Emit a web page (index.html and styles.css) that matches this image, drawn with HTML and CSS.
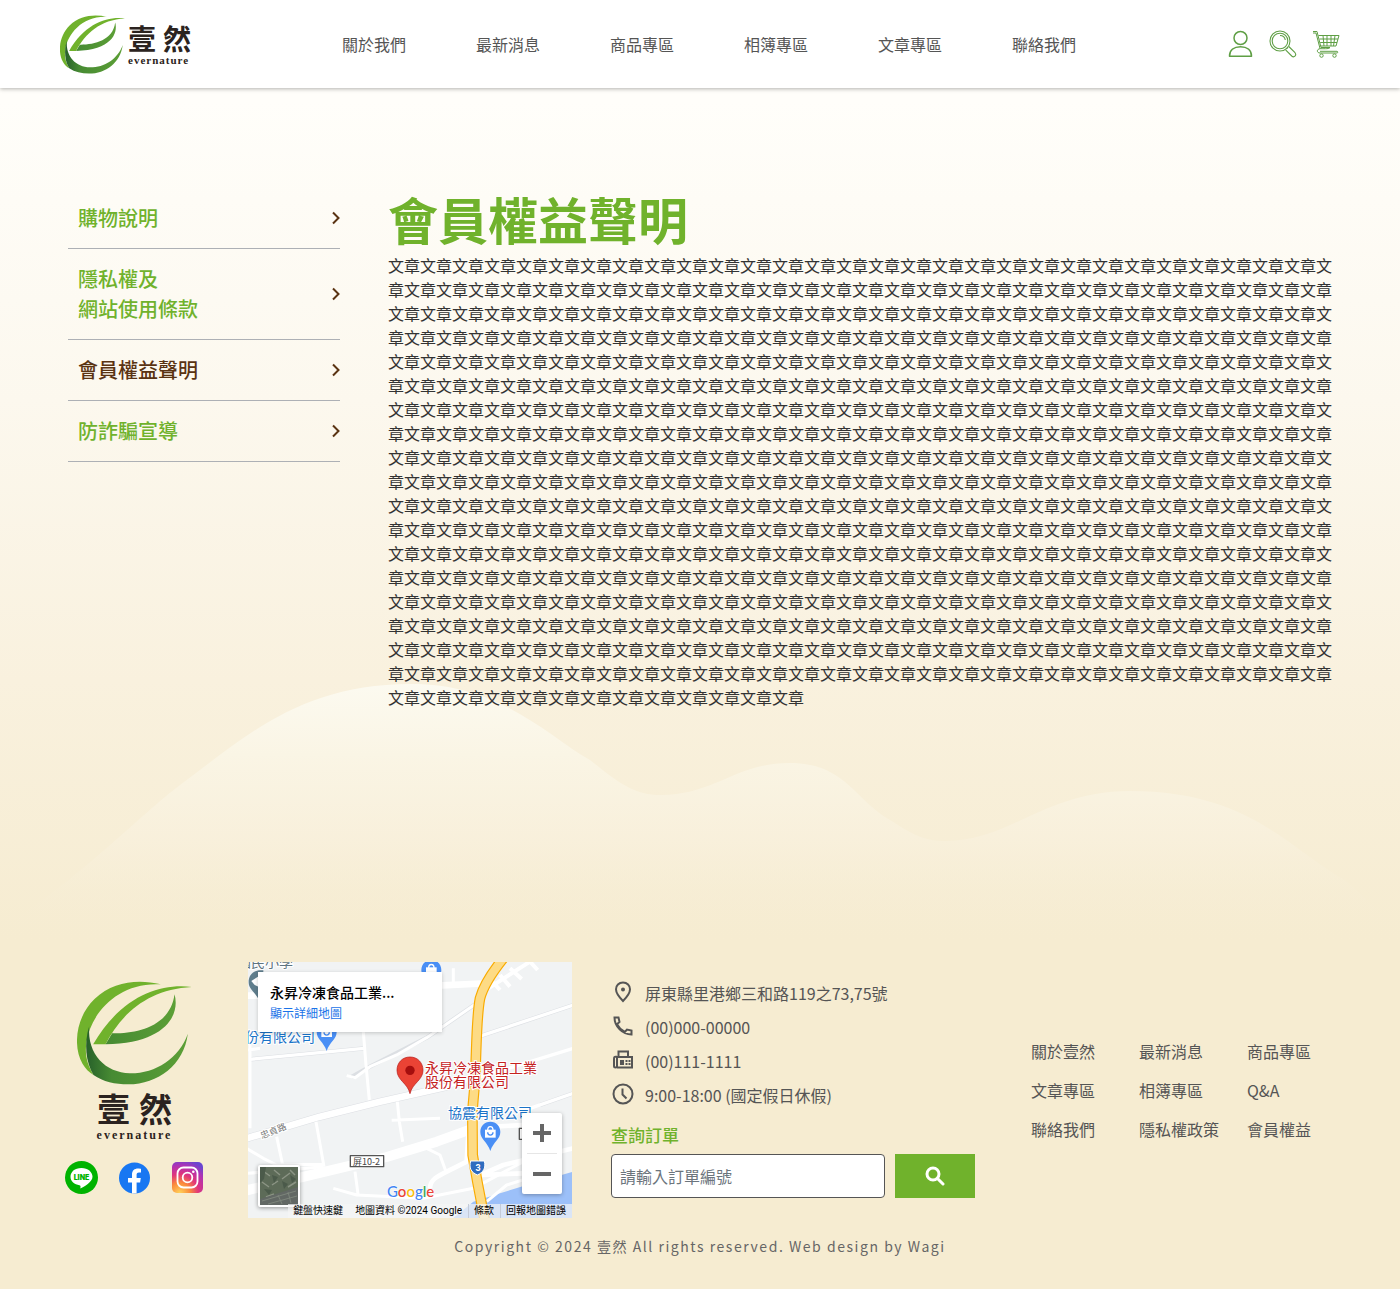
FILE: index.html
```html
<!DOCTYPE html>
<html lang="zh-Hant">
<head>
<meta charset="utf-8">
<meta name="viewport" content="width=device-width, initial-scale=1">
<title>壹然 - 會員權益聲明</title>
<link rel="stylesheet" href="styles.css">
</head>
<body>
<svg class="defs" width="0" height="0" aria-hidden="true">
  <defs>
    <linearGradient id="leafDark" x1="0" x2="1"><stop offset="0" stop-color="#27602a"/><stop offset=".25" stop-color="#478b33"/><stop offset="1" stop-color="#5c9f36"/></linearGradient>
    <linearGradient id="leafInner" x1="0" x2="1"><stop offset="0" stop-color="#468a33"/><stop offset="1" stop-color="#5c9f36"/></linearGradient>
    <symbol id="leaf" viewBox="82 60 344 312">
      <path fill="#70b22c" d="M333 70C262 54 190 62 134 114C78 168 68 256 98 308C106 322 118 334 131 342C112 310 104 280 110 244C122 158 204 62 333 70Z"/>
      <path fill="url(#leafDark)" d="M118 196C102 248 108 305 131 342C160 362 196 370 235 370C325 369 402 312 414 218C388 292 316 338 240 337C168 335 112 282 118 196Z"/>
      <path fill="url(#leafInner)" d="M374 100C391 158 352 247 167 250L187 217C262 218 362 196 374 100Z"/>
      <path fill="#70b22c" d="M426 78C330 66 214 106 130 250L167 250C214 158 296 84 426 78Z"/>
    </symbol>
  </defs>
</svg>

<header class="header">
  <a class="logo" href="#">
    <svg class="logo-leaf"><use href="#leaf"/></svg>
    <span class="logo-words"><span class="logo-name"><span>壹</span><span>然</span></span><span class="logo-latin">evernature</span></span>
  </a>
  <nav class="nav">
    <a href="#">關於我們</a><a href="#">最新消息</a><a href="#">商品專區</a><a href="#">相簿專區</a><a href="#">文章專區</a><a href="#">聯絡我們</a>
  </nav>
  <div class="tools">
    <a href="#" aria-label="會員"><svg width="26" height="28" viewBox="0 0 26 28" fill="none" stroke="#5f9f45" stroke-width="1.5"><circle cx="12.500" cy="8" r="6.500"/><path d="M1.500 26.200C1.500 20 6 16.800 12.500 16.800S23.500 20 23.500 26.200Z" stroke-linejoin="round"/></svg></a>
    <a href="#" aria-label="搜尋"><svg width="28" height="28" viewBox="0 0 28 28" fill="none" stroke="#5f9f45" stroke-width="1.1"><circle cx="11" cy="11" r="10"/><circle cx="11" cy="11" r="7.800"/><path d="M11 5.500A5.500 5.500 0 0 1 16.300 10M17.400 18.800L19 17.200M19.800 16.500L26 22.700C28 25.500 25 28 22.700 26L16.600 19.900"/></svg></a>
    <a href="#" aria-label="購物車"><svg width="28" height="28" viewBox="0 0 28 28" fill="none" stroke="#5f9f45" stroke-width="1"><path d="M1 1.500H5L9 17.500H18M1 3H4L8 18.500M6.500 5.500H27L24 16H9M7.500 9H26M8.200 12.500H25M11 5.500L12 16M15 5.500V16M19 5.500V16M23 5.500L21.500 16M18 17.500C17 19 14 18.700 8 18.700C4.500 19 4.500 23 8 23H25C26 23 26 21.300 25 21.300H8"/><circle cx="9.500" cy="25.600" r="1.700"/><circle cx="22.500" cy="25.600" r="1.700"/></svg></a>
  </div>
</header>

<main class="main">
  <svg class="hills" viewBox="0 684 1400 290" preserveAspectRatio="none" aria-hidden="true">
    <defs><linearGradient id="hill" gradientUnits="userSpaceOnUse" x1="0" y1="684" x2="0" y2="930"><stop offset="0" stop-color="#fcfaf0"/><stop offset=".3" stop-color="#faf5e5" stop-opacity=".95"/><stop offset=".65" stop-color="#f8f0dc" stop-opacity=".8"/><stop offset="1" stop-color="#f6ecd2" stop-opacity="0"/></linearGradient></defs>
    <path fill="url(#hill)" d="M0 930C90 870 140 815 180 785C245 737 300 684 411 684C500 684 545 734 590 760C620 784 635 795 661 795C715 795 735 763 790 763C845 763 855 800 890 820C915 836 925 841 946 841C1010 841 1045 791 1130 791C1250 791 1290 850 1345 880L1400 930Z"/>
  </svg>
  <aside class="side">
    <a href="#">購物說明<svg class="chev" viewBox="0 0 8 14"><path d="M1 1.500L6.500 7L1 12.500"/></svg></a>
    <a href="#"><span>隱私權及<br>網站使用條款</span><svg class="chev" viewBox="0 0 8 14"><path d="M1 1.500L6.500 7L1 12.500"/></svg></a>
    <a class="current" href="#" aria-current="page">會員權益聲明<svg class="chev" viewBox="0 0 8 14"><path d="M1 1.500L6.500 7L1 12.500"/></svg></a>
    <a href="#">防詐騙宣導<svg class="chev" viewBox="0 0 8 14"><path d="M1 1.500L6.500 7L1 12.500"/></svg></a>
  </aside>
  <article class="article">
    <h1>會員權益聲明</h1>
    <p><!--
-->文章文章文章文章文章文章文章文章文章文章文章文章文章文章文章文章<!--
-->文章文章文章文章文章文章文章文章文章文章文章文章文章文章文章文章<!--
-->文章文章文章文章文章文章文章文章文章文章文章文章文章文章文章文章<!--
-->文章文章文章文章文章文章文章文章文章文章文章文章文章文章文章文章<!--
-->文章文章文章文章文章文章文章文章文章文章文章文章文章文章文章文章<!--
-->文章文章文章文章文章文章文章文章文章文章文章文章文章文章文章文章<!--
-->文章文章文章文章文章文章文章文章文章文章文章文章文章文章文章文章<!--
-->文章文章文章文章文章文章文章文章文章文章文章文章文章文章文章文章<!--
-->文章文章文章文章文章文章文章文章文章文章文章文章文章文章文章文章<!--
-->文章文章文章文章文章文章文章文章文章文章文章文章文章文章文章文章<!--
-->文章文章文章文章文章文章文章文章文章文章文章文章文章文章文章文章<!--
-->文章文章文章文章文章文章文章文章文章文章文章文章文章文章文章文章<!--
-->文章文章文章文章文章文章文章文章文章文章文章文章文章文章文章文章<!--
-->文章文章文章文章文章文章文章文章文章文章文章文章文章文章文章文章<!--
-->文章文章文章文章文章文章文章文章文章文章文章文章文章文章文章文章<!--
-->文章文章文章文章文章文章文章文章文章文章文章文章文章文章文章文章<!--
-->文章文章文章文章文章文章文章文章文章文章文章文章文章文章文章文章<!--
-->文章文章文章文章文章文章文章文章文章文章文章文章文章文章文章文章<!--
-->文章文章文章文章文章文章文章文章文章文章文章文章文章文章文章文章<!--
-->文章文章文章文章文章文章文章文章文章文章文章文章文章文章文章文章<!--
-->文章文章文章文章文章文章文章文章文章文章文章文章文章文章文章文章<!--
-->文章文章文章文章文章文章文章文章文章文章文章文章文章文章文章文章<!--
-->文章文章文章文章文章文章文章文章文章文章文章文章文章文章文章文章<!--
-->文章文章文章文章文章文章文章文章文章文章文章文章文章文章文章文章<!--
-->文章文章文章文章文章文章文章文章文章文章文章文章文章文章文章文章<!--
-->文章文章文章文章文章文章文章文章文章文章文章文章文章文章文章文章<!--
-->文章文章文章文章文章文章文章文章文章文章文章文章文章文章文章文章<!--
-->文章文章文章文章文章文章文章文章文章文章文章文章文章文章文章文章<!--
-->文章文章文章文章文章文章文章文章文章文章文章文章文章文章文章文章<!--
-->文章文章文章文章文章文章文章文章文章文章文章文章文章文章文章文章<!--
-->文章文章文章文章文章文章文章文章文章文章文章文章文章文章文章文章<!--
-->文章文章文章文章文章文章文章文章文章文章文章文章文章文章文章文章<!--
-->文章文章文章文章文章文章文章文章文章文章文章文章文章文章文章文章<!--
-->文章文章文章文章文章文章文章文章文章文章文章文章文章文章文章文章</p>
  </article>
</main>

<footer class="footer">
  <div class="footer-row">
    <div class="brand">
      <svg class="brand-leaf"><use href="#leaf"/></svg>
      <div class="brand-name"><span>壹</span><span>然</span></div>
      <div class="brand-latin">evernature</div>
      <div class="social">
        <a href="#" aria-label="LINE"><svg viewBox="0 0 33 33"><circle cx="16.500" cy="16.500" r="16.500" fill="#00b300"/><path fill="#fff" d="M16.500 7C9.500 7 5.500 11 5.500 15.800C5.500 20.300 9.500 23.600 14.500 24.200C16 24.500 15.500 26 15.300 27.500C19 26 27.500 21 27.500 15.800C27.500 11 23 7 16.500 7Z"/><text x="16.500" y="18.500" text-anchor="middle" class="line-word">LINE</text></svg></a>
        <a href="#" aria-label="Facebook"><svg viewBox="0 0 33 33"><circle cx="16.500" cy="17" r="15.500" fill="#1877f2"/><path fill="#fff" d="M14 32.500V21.500H10V17H14V13.500C14 9.500 16.500 7.500 20 7.500C21.500 7.500 23 7.800 23 7.800V11.600H21C19 11.600 18.600 12.700 18.600 13.800V17H22.800L22.100 21.500H18.600V32.300Z"/></svg></a>
        <a href="#" aria-label="Instagram"><svg viewBox="0 0 33 33"><defs><radialGradient id="ig" cx=".25" cy="1" r="1.100"><stop offset="0" stop-color="#ffd35a"/><stop offset=".3" stop-color="#fb8a3c"/><stop offset=".55" stop-color="#e0357b"/><stop offset=".8" stop-color="#b032b4"/><stop offset="1" stop-color="#6a45d0"/></radialGradient></defs><rect x="1" y="1" width="31" height="31" rx="5" fill="url(#ig)"/><g fill="none" stroke="#fff" stroke-width="1.800"><rect x="6.500" y="6.500" width="20" height="20" rx="6"/><circle cx="16.500" cy="16.500" r="4.800"/></g><circle cx="22.300" cy="10.700" r="1.300" fill="#fff"/></svg></a>
      </div>
    </div>

    <div class="map">
      <svg class="map-art" viewBox="0 0 324 256" preserveAspectRatio="xMidYMid slice">
        <rect width="324" height="256" fill="#f1f3f4"/>
        <g transform="scale(.33333) translate(-24 -21)" fill="none" stroke-linejoin="round">
          <path fill="#9cc0f9" d="M1000 650L860 690L780 715L700 740L640 789H1000Z"/>
          <g stroke="#dcdfe3" stroke-width="13"><path d="M600 92L760 84M725 242L1000 150M335 366L390 335L560 248L710 145M900 450L1000 415M30 313L372 280"/></g>
          <path stroke="#dcdfe3" stroke-width="23" d="M20 550L240 485L420 440L620 395"/>
          <g stroke="#fff">
            <path stroke-width="20" d="M20 550L240 485L420 440L620 395"/>
            <path stroke-width="10" d="M620 395L790 345L1000 280M725 242L1000 150M30 313L372 280M870 460L1000 415"/>
            <path stroke-width="20" d="M590 92L760 84M24 122H60"/>
            <path stroke-width="30" d="M20 706L230 656L440 606L590 560L700 520"/>
            <path stroke-width="14" d="M850 510L760 515M710 665L790 630L1000 580M720 660L850 655M570 700C570 670 600 660 640 640L680 620L685 540"/>
            <path stroke-width="9" d="M30 230V520M370 230L378 330L388 435M320 362L345 368L390 335L470 300L560 248L710 145M472 440L478 500L488 560M455 496L600 490M228 500L252 635M110 545L128 630M20 580L70 610L110 630L250 628M24 655L250 635M345 650L355 725M280 700L350 720L550 730L700 700L850 620M560 580L600 600L618 650M740 740L800 690L870 668M640 40V90M24 285L60 280"/>
            <path stroke-width="12" d="M750 72L780 105M780 60L810 95M810 40L845 72M745 100L870 20L893 45"/>
          </g>
          <path stroke="#f9ab00" stroke-width="32" d="M790 10C750 60 728 100 720 130C708 190 710 300 704 390L697 470L698 600L712 680L735 800"/>
          <path stroke="#fddb85" stroke-width="25" d="M790 10C750 60 728 100 720 130C708 190 710 300 704 390L697 470L698 600L712 680L735 800"/>
          <g fill="#4a8ff5"><path id="pin" d="M751 500C733 500 721 513 721 531C721 553 742 560 751 588C760 560 781 553 781 531C781 513 769 500 751 500Z"/><use href="#pin" x="-491" y="-300"/><use href="#pin" x="-177" y="-485"/></g>
          <path fill="#5f7d8c" d="M62 46C38 46 26 62 26 82C26 105 48 112 58 138L70 120V46Z"/>
          <path fill="#fff" d="M34 78L62 60V98L44 90Z"/>
          <g fill="#fff"><path id="bag" d="M735 524H767V548H735Z"/><use href="#bag" x="-491" y="-302"/><use href="#bag" x="-177" y="-487"/></g>
          <path stroke="#fff" stroke-width="4" d="M743 526C743 511 759 511 759 526M566 39C566 25 582 25 582 39"/>
          <path stroke="#4a8ff5" stroke-width="4" d="M743 532C743 543 759 543 759 532M252 232C252 243 268 243 268 232"/>
          <path fill="#ea4335" stroke="#b31412" stroke-width="2" d="M510 306C486 306 471 324 471 346C471 376 503 384 510 416C517 384 549 376 549 346C549 324 534 306 510 306Z"/><circle cx="510" cy="346" r="14" fill="#a50e0e"/>
          <path fill="#2f6cbf" stroke="#fff" stroke-width="3" d="M692 618H733C738 640 730 652 712 660C694 652 686 640 692 618Z"/>
          <path fill="#fff" stroke="#555" stroke-width="4" d="M331 602H431V635H331ZM838 520H860V553H838Z"/>
        </g>
        <g class="map-label">
          <text x="-11" y="5" fill="#5f7480">國民小學</text>
          <text x="-3" y="80" fill="#1a73c8">份有限公司</text>
          <text x="200" y="156" fill="#1a73c8">協震有限公司</text>
          <text x="177" y="111" fill="#c5221f">永昇冷凍食品工業</text>
          <text x="177" y="125" fill="#c5221f">股份有限公司</text>
        </g>
        <text x="105" y="203" class="map-road">屏10-2</text>
        <text x="14" y="177" class="map-road map-street" transform="rotate(-22 14 177)">忠貞路</text>
        <text x="230" y="209" text-anchor="middle" class="map-shield">3</text>
        <text x="139" y="235" class="map-google"><tspan fill="#4285f4">G</tspan><tspan fill="#ea4335">o</tspan><tspan fill="#fbbc04">o</tspan><tspan fill="#4285f4">g</tspan><tspan fill="#34a853">l</tspan><tspan fill="#ea4335">e</tspan></text>
      </svg>
      <div class="map-card"><strong>永昇冷凍食品工業...</strong><a href="#">顯示詳細地圖</a></div>
      <button class="map-sat" type="button" aria-label="衛星檢視"><svg viewBox="0 0 38 38"><rect width="38" height="38" fill="#5d6b58"/><path stroke="#8b9484" stroke-width="1.500" d="M3 4L10 9M14 3L20 8M2 15L9 20M22 12L30 6M28 20L36 15M12 18L18 14M6 30L14 27M30 3L35 8"/><path fill="#4b5a4a" d="M0 0H6L4 12L0 16ZM12 8L18 10L14 16ZM22 14L28 17L24 22ZM4 22L12 23L9 28ZM30 8L36 12L32 16Z"/><path fill="#626864" d="M0 32L38 20V38H0Z"/><path stroke="#7d857b" stroke-width="1" d="M2 34L36 24M8 37L37 29M18 28L22 37M28 25L31 36"/></svg></button>
      <div class="map-zoom"><button type="button" aria-label="放大"><svg viewBox="0 0 18 18"><path d="M0 9H18M9 0V18"/></svg></button><button type="button" aria-label="縮小"><svg viewBox="0 0 18 18"><path d="M0 9H18"/></svg></button></div>
      <div class="map-legal"><span>鍵盤快速鍵</span><span class="data">地圖資料 ©2024 Google</span><a href="#">條款</a><a href="#">回報地圖錯誤</a></div>
    </div>

    <div class="contact">
      <ul>
        <li><svg viewBox="0 0 24 24"><path d="M12 2.500C7.800 2.500 5 5.500 5 9.300C5 14 12 21 12 21S19 14 19 9.300C19 5.500 16.200 2.500 12 2.500Z"/><circle cx="12" cy="9.500" r="1" fill="#555"/></svg>屏東縣里港鄉三和路119之73,75號</li>
        <li><svg viewBox="0 0 24 24"><path d="M3.500 3.500H7.500L8.500 8L6 10.200C8 14 10 16 13.800 18L16 15.500L20.500 16.500V20.500C11.500 20.500 3.500 12.500 3.500 3.500Z"/></svg>(00)000-00000</li>
        <li><svg viewBox="0 0 24 24"><path d="M7.500 9V3.500H17V9M6 9V19.500M6 9H21V19.500H6M6 8.800H4.500C3 8.800 3 9.500 3 11V18C3 20 6 20 6 18"/><path fill="#555" stroke="none" d="M9 12H13V17H9ZM14.500 12H16.500V14H14.500ZM17.500 12H19.500V14H17.500ZM14.500 15H16.500V17H14.500ZM17.500 15H19.500V17H17.500Z"/></svg>(00)111-1111</li>
        <li><svg viewBox="0 0 24 24"><circle cx="12" cy="12" r="9.500"/><path d="M11.500 6.500V12.500L15.500 16.500"/></svg>9:00-18:00 (國定假日休假)</li>
      </ul>
      <form class="lookup">
        <label for="order">查詢訂單</label>
        <div class="lookup-row"><input id="order" type="text" placeholder="請輸入訂單編號"><button type="button" aria-label="查詢"><svg viewBox="0 0 20 20"><circle cx="8" cy="8" r="6"/><path d="M12.500 12.500L18 18"/></svg></button></div>
      </form>
    </div>

    <nav class="links" aria-label="頁尾">
      <a href="#">關於壹然</a><a href="#">最新消息</a><a href="#">商品專區</a>
      <a href="#">文章專區</a><a href="#">相簿專區</a><a href="#">Q&amp;A</a>
      <a href="#">聯絡我們</a><a href="#">隱私權政策</a><a href="#">會員權益</a>
    </nav>
  </div>
  <p class="copyright">Copyright © 2024 壹然 All rights reserved. Web design by Wagi</p>
</footer>
</body>
</html>
```

FILE: styles.css
```css
* { box-sizing: border-box; }
html { background: #f6ecd1; }
/* z-index keeps the hills above this background and below the text */
body {
  margin: 0;
  position: relative; z-index: 0;
  font: 16px/24px "Noto Sans CJK TC", sans-serif;
  color: #333;
  background: linear-gradient(#fffefb 0, #fffefa 100px, #fcf8ee 400px, #f9f1de 680px, #f6ecd1 940px, #f6ecd1 100%);
}
a { color: inherit; text-decoration: none; }
svg { display: block; }
.defs { position: absolute; }

/* header */
.header {
  display: flex; justify-content: space-between; align-items: center;
  height: 88px; padding: 0 60px;
  background: #fff; box-shadow: 0 1px 4px rgba(0, 0, 0, .3);
  position: relative;
}
.logo { display: flex; align-items: center; gap: 3px; width: 130px; color: #2b2320; }
.logo-leaf { width: 65px; height: 59px; flex: none; }
.logo-words { display: flex; flex-direction: column; }
.logo-name { display: flex; gap: 7px; font-size: 28px; line-height: 32px; font-weight: 600; }
.logo-latin { font: bold 11px/12px "Liberation Serif", serif; letter-spacing: 1px; }
.nav { display: flex; gap: 70px; color: #555; }
.tools { display: flex; gap: 15px; }

/* content */
.main { position: relative; display: flex; gap: 48px; padding: 100px 60px 252px 68px; }
.hills { position: absolute; left: 0; bottom: -12px; width: 100%; height: 290px; z-index: -1; }
.side { width: 272px; flex: none; }
.side a {
  display: flex; justify-content: space-between; align-items: center;
  padding: 15px 0 15px 10px; border-bottom: 1px solid #adb0b5;
  font-size: 20px; line-height: 30px; font-weight: 500; color: #70b22c;
}
.side .current { color: #5a3312; }
.chev { width: 8px; height: 14px; fill: none; stroke: #5a3312; stroke-width: 2; }
.article { flex: 1; min-width: 0; }
.article h1 { margin: 0 0 5px; font-size: 50px; line-height: 60px; font-weight: 700; color: #70b22c; }
.article p { margin: 0 0 1px; }

/* footer */
.footer { padding: 0 60px 31px; color: #555; }
.footer-row { display: flex; align-items: center; gap: 39px; }
.brand { width: 149px; flex: none; padding-bottom: 6px; display: flex; flex-direction: column; align-items: center; color: #2b2320; }
.brand-leaf { width: 115px; height: 104px; }
.brand-name { display: flex; gap: 9px; font-size: 33px; line-height: 38px; font-weight: 600; margin-top: 4px; }
.brand-latin { font: bold 12px/16px "Liberation Serif", serif; letter-spacing: 2px; }
.social { display: flex; gap: 20px; margin-top: 18px; }
.social svg { width: 33px; height: 33px; }
.line-word { font: 900 7px Inter, sans-serif; fill: #00b300; }

.map { position: relative; width: 324px; height: 256px; flex: none; overflow: hidden; }
.map-art { width: 100%; height: 100%; }
.map-label { font-size: 14px; stroke: #fff; stroke-width: 2px; paint-order: stroke; }
.map-road { font-size: 9px; fill: #444; }
.map-street { fill: #777; stroke: #fff; stroke-width: 2px; paint-order: stroke; }
.map-shield { font: bold 9px Roboto, sans-serif; fill: #fff; }
.map-google { font: 500 15px Lato, sans-serif; stroke: #fff; stroke-width: 1px; paint-order: stroke; }
.map-card {
  position: absolute; left: 10px; top: 10px; width: 184px; height: 60px; padding: 10px 12px;
  display: flex; flex-direction: column; background: #fff; box-shadow: 0 1px 4px rgba(0, 0, 0, .2);
}
.map-card strong { font-size: 14px; line-height: 21px; font-weight: 500; color: #000; }
.map-card a { font-size: 12px; line-height: 20px; color: #1a73e8; }
.map-sat {
  position: absolute; left: 10px; bottom: 11px; width: 42px; height: 42px; padding: 0;
  border: 2px solid #fff; border-radius: 2px; box-shadow: 0 1px 4px rgba(0, 0, 0, .4);
}
.map-zoom {
  position: absolute; right: 10px; top: 151px; width: 40px; height: 81px; padding: 0 5px;
  background: #fff; border-radius: 2px; box-shadow: 0 1px 4px rgba(0, 0, 0, .3);
}
.map-zoom button { display: grid; place-items: center; width: 30px; height: 40px; padding: 0; border: 0; background: none; }
.map-zoom button + button { border-top: 1px solid #e6e6e6; }
.map-zoom svg { width: 18px; height: 18px; stroke: #666; stroke-width: 4; }
.map-legal {
  position: absolute; right: 0; bottom: 0; display: flex;
  font: 10px/14px Roboto, "Noto Sans CJK TC", sans-serif; color: #000;
  background: rgba(245, 245, 245, .7); white-space: nowrap;
}
.map-legal > * { padding: 0 6px 0 5px; }
.map-legal .data { padding-left: 6px; }
.map-legal a { border-left: 1px solid #c4cbd8; }

.contact { width: 364px; flex: none; padding-bottom: 6px; }
.contact ul { margin: 0; padding: 0; list-style: none; }
.contact li { display: flex; align-items: center; gap: 10px; height: 34px; }
.contact li svg { width: 24px; height: 24px; margin-bottom: 3px; fill: none; stroke: #555; stroke-width: 2; }
.lookup { margin-top: 10px; }
.lookup label { display: block; font-size: 17px; line-height: 26px; font-weight: 500; color: #70b22c; }
.lookup-row { display: flex; gap: 10px; margin-top: 6px; }
.lookup input {
  flex: 1; min-width: 0; height: 44px; padding: 0 8px;
  border: 1px solid #555; border-radius: 4px; background: #fff; font: inherit; color: #333;
}
.lookup input::placeholder { color: #6c757d; opacity: 1; }
.lookup button { display: grid; place-items: center; width: 80px; height: 44px; padding: 0; border: 0; background: #70b22c; }
.lookup button svg { width: 20px; height: 20px; fill: none; stroke: #fff; stroke-width: 3; stroke-linecap: round; }

.links { margin-left: 17px; display: grid; grid-template-columns: 108px 108px auto; row-gap: 15px; white-space: nowrap; }
.links a { justify-self: start; }
.copyright { margin: 16px 0 0; text-align: center; font-size: 14px; line-height: 24px; letter-spacing: .11em; color: #666; }
```
